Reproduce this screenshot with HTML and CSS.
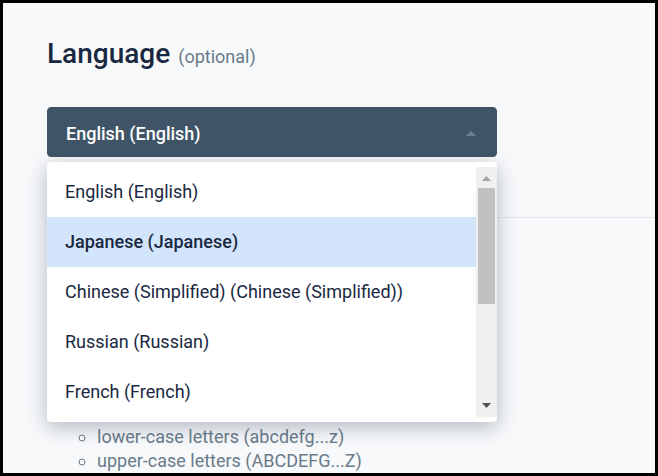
FILE: index.html
```html
<!DOCTYPE html>
<html lang="en">
<head>
    <meta charset="UTF-8">
    <meta name="viewport" content="width=device-width, initial-scale=1.0">
    <title>Language</title>
    <link rel="stylesheet" href="styles.css">
</head>
<body>
    <main class="page">
        <section class="field">
            <h1 class="field-title">
                <label for="language">Language</label>
                <span class="optional">(optional)</span>
            </h1>

            <div class="dropdown">
                <div class="dropdown-control">
                    <select id="language" name="language">
                        <option selected>English (English)</option>
                        <option>Japanese (Japanese)</option>
                        <option>Chinese (Simplified) (Chinese (Simplified))</option>
                        <option>Russian (Russian)</option>
                        <option>French (French)</option>
                    </select>
                    <svg class="arrow" viewBox="0 0 10 5" aria-hidden="true"><path d="M0 5 5 0l5 5z"/></svg>
                </div>

                <div class="menu">
                    <ul class="options" role="listbox" aria-label="Language">
                        <li role="option" aria-selected="true">English (English)</li>
                        <li role="option" aria-selected="false" class="active">Japanese (Japanese)</li>
                        <li role="option" aria-selected="false">Chinese (Simplified) (Chinese (Simplified))</li>
                        <li role="option" aria-selected="false">Russian (Russian)</li>
                        <li role="option" aria-selected="false">French (French)</li>
                    </ul>
                    <div class="scrollbar" aria-hidden="true">
                        <svg class="scroll-up" viewBox="0 0 9 5"><path d="M0 5 4.500 0 9 5z"/></svg>
                        <div class="track"><div class="thumb"></div></div>
                        <svg class="scroll-down" viewBox="0 0 9 5"><path d="M0 0h9L4.500 5z"/></svg>
                    </div>
                </div>
            </div>
        </section>

        <ul class="rules">
            <li>lower-case letters (abcdefg...z)</li>
            <li>upper-case letters (ABCDEFG...Z)</li>
        </ul>
    </main>
</body>
</html>
```
FILE: styles.css
```css
* {
    box-sizing: border-box;
}

body {
    margin: 0;
    font-family: Roboto, Arial, sans-serif;
    font-size: 18px;
    color: #192841;
    background-color: #f8f9fb;
}

ul {
    margin: 0;
    padding: 0;
    list-style: none;
}

.page {
    display: flex;
    flex-direction: column;
    min-height: 100vh;
    border: 3px solid #000;
}

.field {
    margin-left: 44px;
    padding: 33px 44px 60px 0;
    border-bottom: 1px solid #e3e6ea;
}

.field-title {
    display: flex;
    align-items: baseline;
    gap: 8px;
    margin: 0 0 32px;
    font-size: 28px;
    line-height: 36px;
    font-weight: 500;
}

.optional {
    font-size: 18px;
    font-weight: 400;
    color: #697b89;
}

/* Dropdown */
.dropdown {
    position: relative;
    max-width: 450px;
}

.dropdown-control {
    display: grid;
    align-items: center;
}

.dropdown-control select,
.dropdown-control .arrow {
    grid-area: 1 / 1;
}

.dropdown-control select {
    appearance: none;
    width: 100%;
    height: 50px;
    padding: 2px 40px 0 18px;
    border: 1px solid #3f5567;
    border-radius: 4px;
    background-color: #3f5567;
    color: #fff;
    font: inherit;
    font-weight: 500;
}

.arrow {
    justify-self: end;
    width: 10px;
    height: 5px;
    margin-right: 21px;
    margin-top: 3px;
    fill: #6f808c;
    pointer-events: none;
}

.menu {
    position: absolute;
    top: 100%;
    left: 0;
    right: 0;
    display: flex;
    margin-top: 5px;
    padding: 5px 0;
    border-radius: 4px;
    background-color: #fff;
    box-shadow: 0 5px 20px rgba(63, 85, 103, 0.4);
}

.options {
    flex: 1;
}

.options li {
    padding: 0 18px;
    line-height: 50px;
    cursor: pointer;
}

.options .active {
    background-color: #d3e5fa;
    font-weight: 500;
}

/* Scrollbar */
.scrollbar {
    display: flex;
    flex-direction: column;
    align-items: center;
    width: 21px;
    background-color: #f0f0f0;
}

.scroll-up,
.scroll-down {
    width: 9px;
    height: 5px;
    margin: 9px 0 7px;
    fill: #a3a3a3;
}

.scroll-down {
    margin: 7px 0 9px;
    fill: #505050;
}

.track {
    flex: 1;
    width: 17px;
}

.thumb {
    height: 56%;
    background-color: #c1c1c1;
}

/* Allowed characters */
.rules {
    margin-top: auto;
    padding-left: 94px;
    list-style: circle;
    line-height: 24px;
    color: #697b89;
}
```
